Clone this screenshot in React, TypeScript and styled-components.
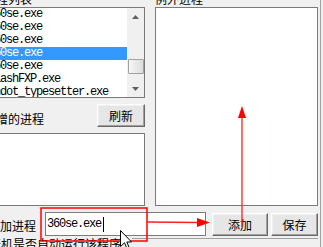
import * as React from 'react'
import styled, { createGlobalStyle } from 'styled-components'

const GlobalStyle = createGlobalStyle`
  html, body {
    margin: 0;
    padding: 0;
    background: #f0f0f0;
  }
  body {
    font-family: 'Noto Sans CJK SC', sans-serif;
    font-size: 12px;
    color: #000;
  }
`

const processes = [
  '360se.exe',
  '360se.exe',
  '360se.exe',
  '360se.exe',
  '360se.exe',
  'FlashFXP.exe',
  'Endot_typesetter.exe',
]
const selectedIndex = 3

const UpArrow = () => (
  <svg width='7' height='4' viewBox='0 0 7 4'>
    <polygon points='3.5,0 7,4 0,4' fill='#606060' />
  </svg>
)

const DownArrow = () => (
  <svg width='7' height='4' viewBox='0 0 7 4'>
    <polygon points='0,0 7,0 3.5,4' fill='#606060' />
  </svg>
)

const Annotations = () => (
  <Overlay width='323' height='247' viewBox='0 0 323 247'>
    <rect x='41' y='208' width='106' height='33' fill='none' stroke='#ff0000' strokeWidth='1.5' />
    <line x1='147' y1='222' x2='199' y2='222.5' stroke='#ff2020' strokeWidth='1.3' />
    <polygon points='197,218 210,222.5 197,227' fill='#ff0000' />
    <line x1='242' y1='227' x2='242' y2='116' stroke='#ff2020' strokeWidth='1.3' />
    <polygon points='238,118 242,106 246,118' fill='#ff0000' />
  </Overlay>
)

const Cursor = () => (
  <CursorIcon width='13' height='20' viewBox='0 0 13 20'>
    <path
      d='M0.5 0.5 L0.5 16.5 L4.5 12.8 L7.2 19 L9.4 18 L6.8 12 L11.5 12 Z'
      fill='#fff'
      stroke='#000'
      strokeWidth='1'
      strokeLinejoin='miter'
    />
  </CursorIcon>
)

export default function App() {
  return (
    <Screen>
      <GlobalStyle />
      <Dialog>
        <Main>
          <Column>
            <GroupLabel>进程列表</GroupLabel>
            <ListBox>
              <Items>
                {processes.map((name, i) => (
                  <Item key={i} $selected={i === selectedIndex}>
                    {name}
                  </Item>
                ))}
              </Items>
              <ScrollBar>
                <ScrollButton>
                  <UpArrow />
                </ScrollButton>
                <Track>
                  <Thumb />
                </Track>
                <ScrollButton>
                  <DownArrow />
                </ScrollButton>
              </ScrollBar>
            </ListBox>
            <ToolRow>
              <RowLabel>新增的进程</RowLabel>
              <Button $width={48}>刷新</Button>
            </ToolRow>
            <WhiteBox $height={73} />
          </Column>
          <Column>
            <GroupLabel>例外进程</GroupLabel>
            <WhiteBox $height={199} />
          </Column>
        </Main>
        <BottomRow>
          <FieldLabel>添加进程</FieldLabel>
          <TextField>
            360se.exe
            <Caret />
          </TextField>
          <Button $width={56} $gap={6}>添加</Button>
          <Button $width={47} $gap={3}>保存</Button>
        </BottomRow>
        <CaptionRow>
          <Caption>开机是否自动运行该程序</Caption>
          <Rule />
        </CaptionRow>
      </Dialog>
      <Annotations />
      <Cursor />
    </Screen>
  )
}

const Screen = styled.div`
  position: relative;
  width: 323px;
  height: 247px;
  overflow: hidden;
  background: #f0f0f0;
`
const Dialog = styled.div`
  box-sizing: border-box;
  width: 337px;
  height: 270px;
  margin: -9px 0 0 -16px;
  padding-right: 2px;
  border-right: 1px solid #a0a0a0;
  display: flex;
  flex-direction: column;
`
const Main = styled.div`
  display: grid;
  grid-template-columns: 161px 163px;
  column-gap: 10px;
`
const Column = styled.div`
  display: flex;
  flex-direction: column;
`
const GroupLabel = styled.div`
  height: 16px;
  line-height: 16px;
  white-space: nowrap;
`
const ListBox = styled.div`
  box-sizing: border-box;
  height: 91px;
  display: flex;
  border: 1px solid #7a7a7a;
  background: #fff;
  overflow: hidden;
`
const Items = styled.div`
  flex: 1;
  min-width: 0;
  overflow: hidden;
`
const Item = styled.div<{ $selected: boolean }>`
  height: 13px;
  line-height: 13px;
  padding-left: 3px;
  font-family: 'Liberation Mono', monospace;
  font-size: 12px;
  letter-spacing: -1.2px;
  white-space: nowrap;
  background: ${p => (p.$selected ? '#3399ff' : 'transparent')};
  color: ${p => (p.$selected ? '#fff' : '#000')};
`
const ScrollBar = styled.div`
  width: 17px;
  display: flex;
  flex-direction: column;
  background: #f0f0f0;
`
const ScrollButton = styled.div`
  height: 17px;
  display: flex;
  align-items: center;
  justify-content: center;
`
const Track = styled.div`
  flex: 1;
  display: flex;
  flex-direction: column;
`
const Thumb = styled.div`
  box-sizing: border-box;
  margin: 34px 0 0 1px;
  height: 15px;
  border: 1px solid #a0a0a0;
  border-radius: 1px;
  background: linear-gradient(to right, #f6f6f6, #dcdcdc);
`
const ToolRow = styled.div`
  height: 23px;
  margin-top: 6px;
  display: flex;
  align-items: center;
  justify-content: space-between;
`
const RowLabel = styled.span`
  padding-top: 5px;
  white-space: nowrap;
`
const Button = styled.button<{ $width: number; $gap?: number }>`
  box-sizing: border-box;
  width: ${p => p.$width}px;
  height: 23px;
  margin: 0 0 0 ${p => p.$gap ?? 0}px;
  padding: 0;
  font: inherit;
  color: #000;
  background: #e6e6e6;
  border: 1px solid;
  border-color: #fff #696969 #696969 #fff;
  box-shadow: inset -1px -1px #a0a0a0, inset 1px 1px #f0f0f0;
  flex-shrink: 0;
`
const WhiteBox = styled.div<{ $height: number }>`
  box-sizing: border-box;
  height: ${p => p.$height}px;
  margin-top: ${p => (p.$height < 100 ? 6 : 0)}px;
  border: 1px solid #7a7a7a;
  background: #fff;
`
const BottomRow = styled.div`
  height: 24px;
  margin-top: 6px;
  padding-left: 4px;
  display: flex;
  align-items: flex-end;
`
const FieldLabel = styled.span`
  width: 57px;
  flex-shrink: 0;
  align-self: center;
  padding-top: 2px;
  white-space: nowrap;
`
const TextField = styled.div`
  box-sizing: border-box;
  width: 161px;
  height: 24px;
  flex-shrink: 0;
  padding-left: 1px;
  display: flex;
  align-items: center;
  border: 1px solid #7a7a7a;
  background: #fff;
  font-family: 'Liberation Mono', monospace;
  font-size: 12px;
  letter-spacing: -1.2px;
`
const Caret = styled.span`
  width: 1px;
  height: 15px;
  margin-left: 2px;
  background: #000;
`
const CaptionRow = styled.div`
  margin-top: 1px;
  padding-left: 5px;
  display: flex;
  align-items: flex-start;
`
const Caption = styled.span`
  line-height: 14px;
  white-space: nowrap;
`
const Rule = styled.div`
  flex: 1;
  margin: 1px 0 0 11px;
  border-top: 1px solid #a0a0a0;
`
const Overlay = styled.svg`
  position: absolute;
  left: 0;
  top: 0;
  pointer-events: none;
`
const CursorIcon = styled.svg`
  position: absolute;
  left: 120px;
  top: 230px;
  pointer-events: none;
`
